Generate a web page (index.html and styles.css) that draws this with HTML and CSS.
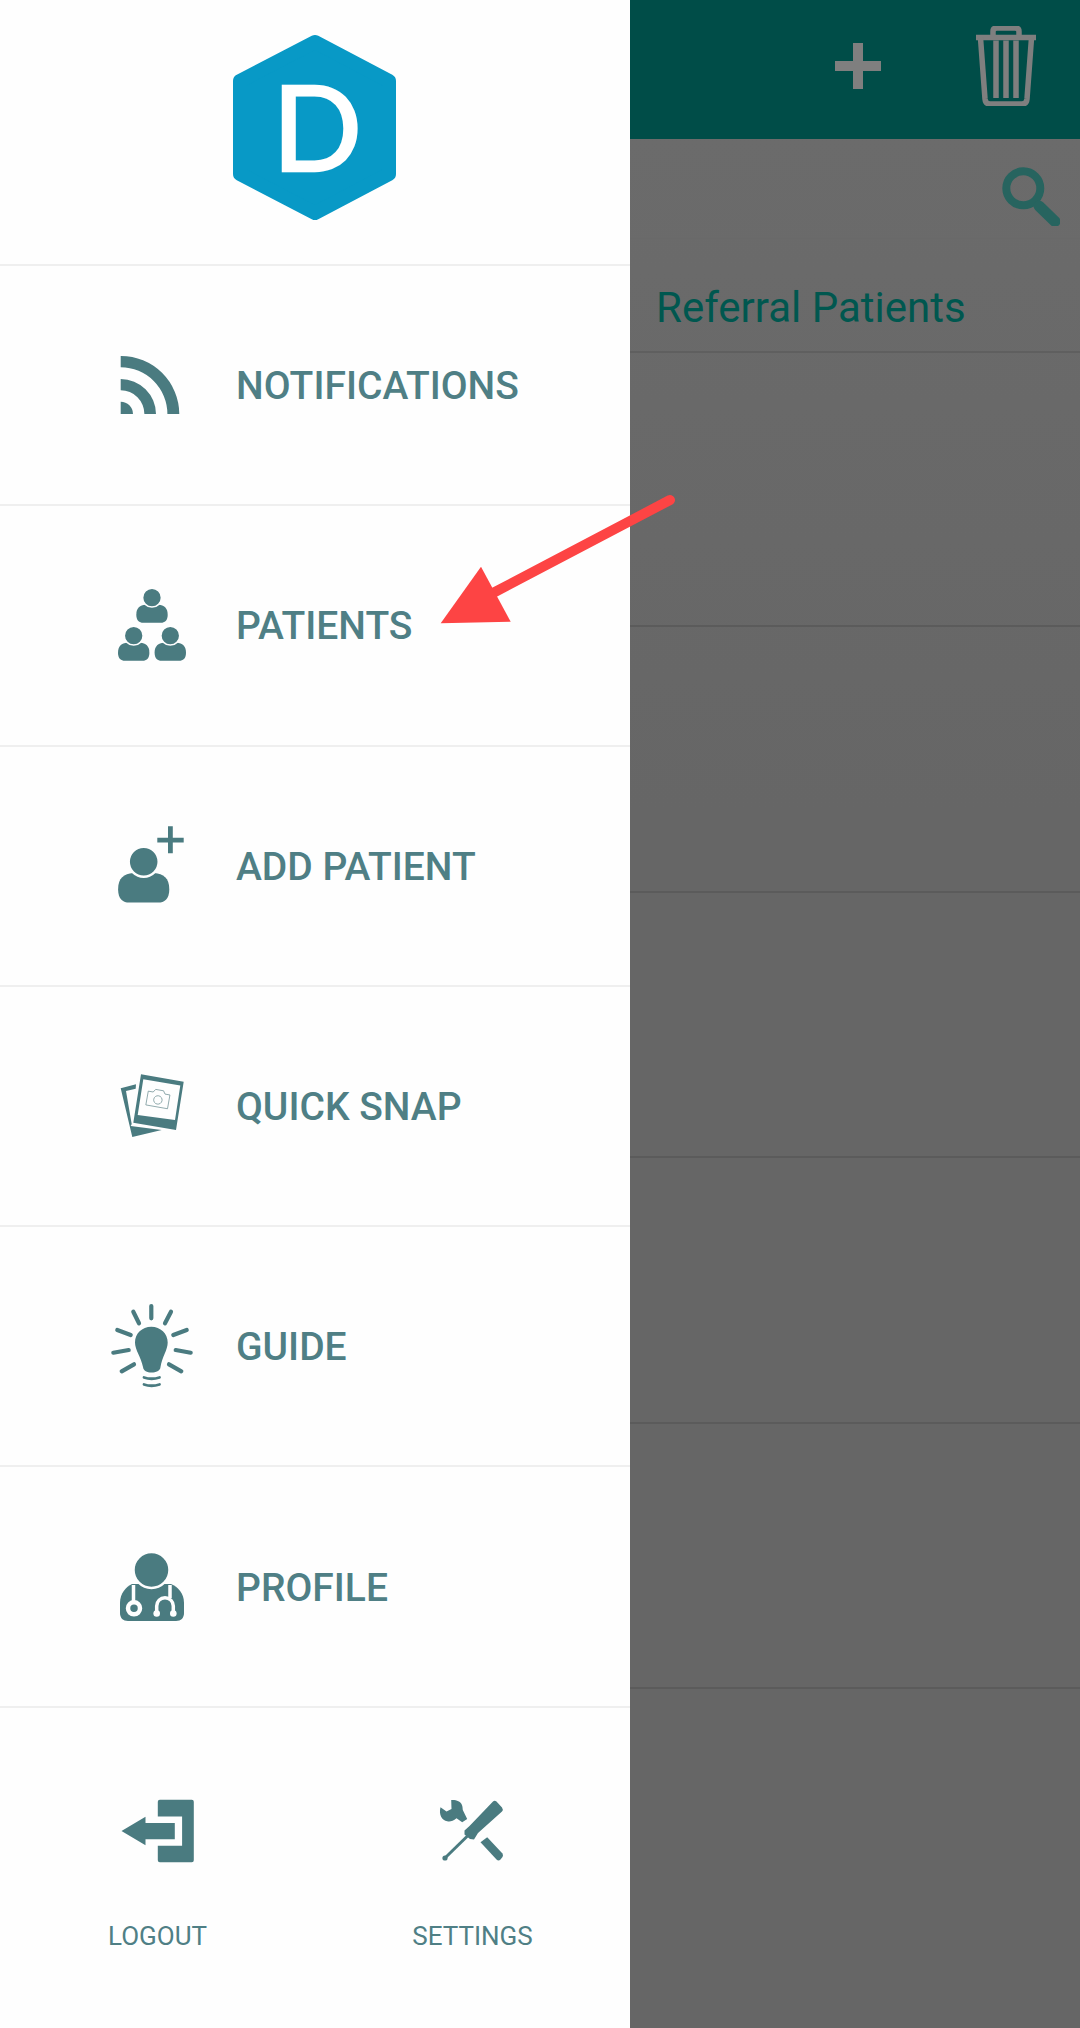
FILE: index.html
```html
<!DOCTYPE html>
<html lang="en">
<head>
<meta charset="utf-8">
<title>Menu</title>
<link rel="stylesheet" href="styles.css">
</head>
<body>
<div class="screen">
  <nav class="drawer">
    <div class="logo-wrap">
      <svg class="logo" viewBox="0 0 180 200" width="180" height="200">
        <polygon class="hex" points="90,14 164,53 164,146 90,185 15,146 15,53"/>
        <text class="logo-letter" x="92" y="143" text-anchor="middle">D</text>
      </svg>
    </div>
    <a class="item">
      <svg class="item-icon" viewBox="0 0 120 100" width="120" height="100"><path d="M30.7 21A58.3 58.3 0 0 1 89.3 79H77.4A46.7 46.7 0 0 0 30.7 32.300ZM30.7 44A35.300 35.300 0 0 1 66 79H54.400A23.700 23.700 0 0 0 30.7 55.300ZM30.7 66.700A12.300 12.300 0 0 1 43 79H30.7Z"/></svg>
      <span class="item-label">NOTIFICATIONS</span>
    </a>
    <a class="item">
      <svg class="item-icon" viewBox="0 0 120 100" width="120" height="100">
        <g transform="translate(62 22.7)"><path d="M-15.700 17C-15.700 10-12 7.500-6.500 7L6.500 7C12 7.500 15.700 10 15.700 17C15.700 23 12.500 25 9 25L-9 25C-12.500 25-15.700 23-15.700 17Z"/><circle r="9.400" class="halo"/></g>
        <g transform="translate(43.7 60.7)"><path d="M-15.700 17C-15.700 10-12 7.500-6.500 7L6.500 7C12 7.500 15.700 10 15.700 17C15.700 23 12.500 25 9 25L-9 25C-12.500 25-15.700 23-15.700 17Z"/><circle r="9.400" class="halo"/></g>
        <g transform="translate(80.3 60.7)"><path d="M-15.700 17C-15.700 10-12 7.500-6.500 7L6.500 7C12 7.500 15.700 10 15.700 17C15.700 23 12.500 25 9 25L-9 25C-12.500 25-15.700 23-15.700 17Z"/><circle r="9.400" class="halo"/></g>
      </svg>
      <span class="item-label">PATIENTS</span>
    </a>
    <a class="item">
      <svg class="item-icon" viewBox="0 0 120 100" width="120" height="100">
        <g transform="translate(53.7 45.7) scale(1.63)"><path d="M-15.700 17C-15.700 10-12 7.500-6.500 7L6.500 7C12 7.500 15.700 10 15.700 17C15.700 23 12.500 25 9 25L-9 25C-12.500 25-15.700 23-15.700 17Z"/><circle r="9.200" class="halo"/></g>
        <path d="M78 10.300h4.800v11.400h10.900v4.800H82.800v10.800H78V26.500H67.300v-4.800H78Z"/>
      </svg>
      <span class="item-label">ADD PATIENT</span>
    </a>
    <a class="item">
      <svg class="item-icon" viewBox="0 0 120 100" width="120" height="100">
        <path d="M30.700 32.300L46 28.300L45.700 32.700L36 35L41.700 68L40.700 70L71.700 74L42.300 81Z"/>
        <path fill-rule="evenodd" d="M51 18.300L93.700 25.700L86 74L43.300 66.700ZM53.300 23.300L90.300 29.400L85 64L47.700 59Z"/>
        <g class="camera" transform="rotate(10 68.300 43.300)">
          <path d="M57 37h5l2-3h8l2 3h5v14H57Z"/>
          <circle cx="68" cy="44" r="4.200"/>
        </g>
      </svg>
      <span class="item-label">QUICK SNAP</span>
    </a>
    <a class="item">
      <svg class="item-icon" viewBox="0 0 120 100" width="120" height="100">
        <path d="M61.300 30.700C70.500 30.700 77.700 37.500 77.700 46.500C77.700 54 72 61 70.500 71C70.200 75 66 76.500 61.500 76.500C57 76.500 53.500 75 53 71C51 61 45 54 45 46.500C45 37.500 52 30.700 61.300 30.700Z"/>
        <g class="ray">
          <path d="M61.300 10V22.300M43.300 15.700L49 27.300M81 15.700L75 27.300M27.300 34L40.700 39M96.700 34L83.300 39M23.300 56.700L38.700 54M100.700 56.700L85.700 54M31.700 75.300L44 68.300M91.300 75.300L79 68.300"/>
        </g>
        <g class="filament"><path d="M54 81.500Q61.500 84 69.500 81.500M54 88.500Q61.500 91 69.500 88.500"/></g>
      </svg>
      <span class="item-label">GUIDE</span>
    </a>
    <a class="item">
      <svg class="item-icon" viewBox="0 0 120 100" width="120" height="100">
        <path d="M42 47H81C88 50 94 56 94 66V76C94 81 91 84 86 84H38C33 84 30 81 30 76V66C30 56 36 50 42 47Z"/>
        <circle cx="61.500" cy="33" r="18" class="halo-head"/>
        <g class="scope">
          <path d="M43.500 48V64M80 48V61"/>
          <path d="M66.700 76V69A8.300 8.300 0 0 1 83.300 69V76"/>
          <circle cx="44" cy="71.300" r="6"/>
        </g>
        <circle cx="66.700" cy="76.500" r="3.300" class="dot-w"/>
        <circle cx="83.300" cy="76.500" r="3.300" class="dot-w"/>
      </svg>
      <span class="item-label">PROFILE</span>
    </a>
    <div class="foot">
      <a class="foot-item">
        <svg class="foot-icon" viewBox="0 0 100 70" width="100" height="70">
          <path d="M51.800 3.700H83.800A2 2 0 0 1 85.800 5.700V64.300A2 2 0 0 1 83.800 66.300H51.800A2 2 0 0 1 49.800 64.300V49.700H74.100V20.400H49.800V5.700A2 2 0 0 1 51.800 3.700Z"/>
          <path d="M13.500 35L37.500 20.700V27H66.800V43.300H37.500V49.300Z"/>
        </svg>
        <span class="foot-label">LOGOUT</span>
      </a>
      <a class="foot-item">
        <svg class="foot-icon" viewBox="0 0 100 70" width="100" height="70">
          <path d="M28.200 4C33 3.500 37.500 5.500 38.500 8C40 11 39.500 13 39.800 14L44.200 23L39.200 26.300L33.500 22.300C30 25.300 27 25.800 24.200 25.300C19 24.500 15.500 19 17.500 11.300L23.500 15.500L28.500 13Z"/>
          <path d="M70 5.500Q71.500 3.800 73.500 5.500L79 11.500Q80.500 13.500 79 15.500L55 37L51 43.500L47 43L41.500 38.500L41.500 34.500L46.500 30Z"/>
          <path class="shaft" d="M44.500 40L23 61"/>
          <circle cx="22" cy="62" r="2.600"/>
          <path d="M57.500 46.300L64.200 41.300L79.500 57.500Q80.500 59.500 79.500 61L77.500 63.500Q75.500 65.500 73.500 63.500Z"/>
        </svg>
        <span class="foot-label">SETTINGS</span>
      </a>
    </div>
  </nav>

  <main class="behind">
    <header class="topbar">
      <svg class="top-plus" viewBox="0 0 48 48" width="48" height="48"><path d="M19 1h10v18h18v10H29v18H19V29H1V19h18Z"/></svg>
      <svg class="top-trash" viewBox="0 0 60 80" width="60" height="80">
        <path d="M0 11.500H60M17 10V5.500Q17 2 21 2H39Q43 2 43 5.500V10"/>
        <path d="M4.500 12L9 73Q9.500 78 14 78H46Q50.500 78 51 73L55.500 12"/>
        <path d="M20 14.500V72M30 14.500V72M40 14.500V72"/>
      </svg>
    </header>
    <div class="searchrow">
      <svg class="search" viewBox="0 0 60 60" width="60" height="60">
        <circle cx="23.300" cy="22.300" r="17"/>
        <path d="M39 40L55 55.500"/>
      </svg>
    </div>
    <div class="tabrow">Referral Patients</div>
    <div class="rows">
      <div class="row row-first"></div>
      <div class="row"></div>
      <div class="row"></div>
      <div class="row"></div>
      <div class="row"></div>
      <div class="row row-last"></div>
    </div>
  </main>

  <svg class="pointer" viewBox="0 0 260 160" width="260" height="160">
    <path class="pointer-line" d="M250 30L73 123"/>
    <polygon class="pointer-head" points="61,96.700 90.700,151.700 20.700,153.300"/>
  </svg>
</div>
</body>
</html>
```
FILE: styles.css
```css
* { box-sizing: border-box; }
html, body { margin: 0; padding: 0; }
body { width: 1080px; height: 2028px; overflow: hidden; font-family: Roboto, "Liberation Sans", sans-serif; background: #666; }
.screen { position: relative; display: flex; width: 1080px; height: 2028px; }

.drawer { width: 630px; height: 2028px; background: #fefefe; display: flex; flex-direction: column; flex: none; }
.logo-wrap { height: 266px; flex: none; display: flex; justify-content: center; padding-top: 28px; border-bottom: 2px solid #efefef; }
.logo { display: block; }
.hex { fill: #0899c6; stroke: #0899c6; stroke-width: 14; stroke-linejoin: round; }
.logo-letter { font-family: Lato, sans-serif; font-size: 118px; fill: #fff; stroke: #fff; stroke-width: 2.500; }

.item { height: 240.300px; flex: none; display: flex; align-items: center; padding-left: 90px; border-bottom: 2px solid #efefef; color: #4f7f85; }
.item-icon { flex: none; display: block; margin-right: 26px; fill: #4a7b80; }
.item-label { position: relative; top: 1px; font-size: 39px; font-weight: 500; line-height: 46px; }
.halo { stroke: #fefefe; stroke-width: 1.500; }
.halo-head { stroke: #fefefe; stroke-width: 2.500; }
.camera { fill: none; stroke: #6d8f93; stroke-width: .7; }
.ray path { fill: none; stroke: #4a7b80; stroke-width: 4.200; stroke-linecap: round; }
.filament path { fill: none; stroke: #4a7b80; stroke-width: 2.800; stroke-linecap: round; }
.scope path { fill: none; stroke: #fefefe; stroke-width: 3.500; }
.scope circle { fill: #4a7b80; stroke: #fefefe; stroke-width: 4.500; }
.dot-w { fill: #fefefe; }

.foot { flex: 1; display: grid; grid-template-columns: 1fr 1fr; background: #fefefe; }
.foot-item { display: flex; flex-direction: column; align-items: center; padding-top: 88px; color: #4f7f85; }
.foot-icon { display: block; fill: #4a7b80; }
.foot-label { margin-top: 55px; font-size: 26px; line-height: 30px; }
.shaft { fill: none; stroke: #4a7b80; stroke-width: 3; }

.behind { flex: 1; display: flex; flex-direction: column; height: 2028px; background: linear-gradient(#6c6c6c, #666 40%, #666); }
.topbar { height: 139px; flex: none; background: #004d48; display: flex; align-items: flex-start; justify-content: flex-end; padding: 26px 44px 0 0; gap: 94px; }
.top-plus { display: block; margin-top: 16px; fill: #7f7f7f; }
.top-trash { display: block; fill: none; stroke: #7f7f7f; stroke-width: 5.500; }
.searchrow { height: 100px; flex: none; display: flex; justify-content: flex-end; padding: 27px 20px 0 0; border-bottom: 1px solid #696969; }
.search { display: block; fill: none; stroke: #27645f; stroke-width: 8; }
.search path { stroke-width: 11; stroke-linecap: round; }
.tabrow { height: 114px; flex: none; display: flex; align-items: center; padding: 24px 0 0 26px; font-size: 42px; color: #00574f; border-bottom: 2px solid #5f5f5f; }
.rows { flex: 1; display: flex; flex-direction: column; }
.row { height: 265.500px; flex: none; border-bottom: 2px solid #5b5b5b; }
.row-first { height: 274px; }
.row-last { flex: 1; border-bottom: 0; }

.pointer { position: absolute; left: 420px; top: 470px; overflow: visible; }
.pointer-line { fill: none; stroke: #fd4444; stroke-width: 10; stroke-linecap: round; }
.pointer-head { fill: #fd4444; }
```
